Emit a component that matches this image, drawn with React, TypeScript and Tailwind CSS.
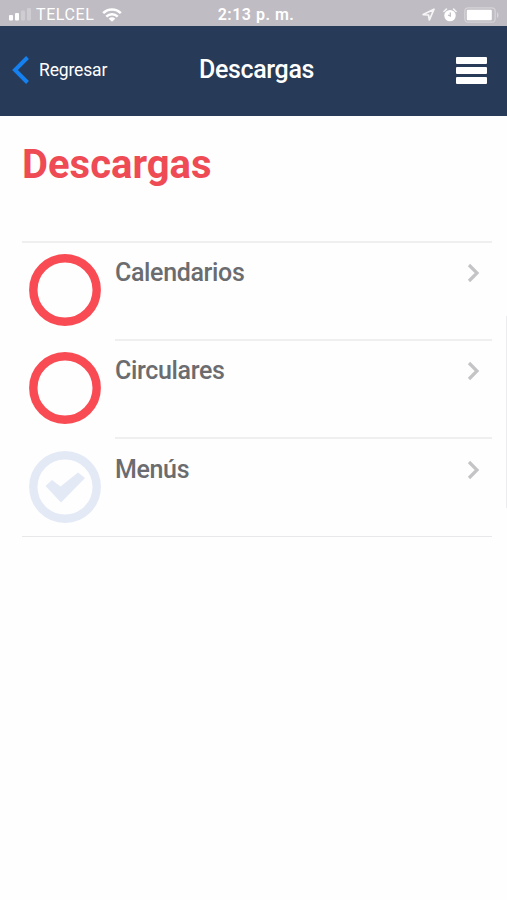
import { clsx } from 'clsx';

type Download = {
  id: string;
  title: string;
  read: boolean;
};

const downloads: Download[] = [
  { id: 'calendarios', title: 'Calendarios', read: false },
  { id: 'circulares', title: 'Circulares', read: false },
  { id: 'menus', title: 'Menús', read: true },
];

function SignalBars() {
  return (
    <svg width="24" height="13" viewBox="0 0 24 13" fill="white">
      <rect x="0" y="7" width="4" height="5.5" rx="1" />
      <rect x="6" y="5" width="4" height="7.5" rx="1" />
      <rect x="12" y="2.5" width="4" height="10" rx="1" opacity="0.25" />
      <rect x="18" y="0" width="4" height="12.5" rx="1" opacity="0.25" />
    </svg>
  );
}

function WifiIcon() {
  return (
    <svg width="20" height="14" viewBox="0 0 20 14" fill="none" stroke="white" strokeWidth="2.5">
      <path d="M1.2 5.2C6 0.2 14 0.2 18.8 5.2" />
      <path d="M4.3 8.6C7.5 5.3 12.5 5.3 15.7 8.6" />
      <path d="M10 13.8L6.7 10.7C8.6 8.9 11.4 8.9 13.3 10.7Z" fill="white" stroke="none" />
    </svg>
  );
}

function LocationIcon() {
  return (
    <svg width="13" height="13" viewBox="0 0 13 13" fill="none" stroke="white" strokeOpacity="0.85" strokeWidth="1.7" strokeLinejoin="round">
      <path d="M12 1.2L1.2 6.6L6.5 7L7.4 12Z" />
    </svg>
  );
}

function AlarmIcon() {
  return (
    <svg width="14" height="14" viewBox="0 0 14 14" fill="none">
      <circle cx="7" cy="7.6" r="5.7" fill="white" />
      <path d="M0.9 3.5L3.4 1.1M13.1 3.5L10.6 1.1" stroke="white" strokeOpacity="0.8" strokeWidth="1.6" strokeLinecap="round" />
      <path d="M7.3 4.6V8L5 7" stroke="#bfbcc3" strokeWidth="1.3" />
    </svg>
  );
}

function BatteryIcon() {
  return (
    <svg width="36" height="16" viewBox="0 0 36 16" fill="none">
      <rect x="0.8" y="0.8" width="30.4" height="14.4" rx="3.5" stroke="white" strokeOpacity="0.35" strokeWidth="1.3" />
      <rect x="2.8" y="2.8" width="25" height="10.4" rx="1" fill="white" />
      <path d="M33 5.2C35 6 35 10 33 10.8Z" fill="white" fillOpacity="0.4" />
    </svg>
  );
}

function StatusBar() {
  return (
    <div className="grid h-[26px] grid-cols-[1fr_auto_1fr] items-center bg-[#bfbcc3] pt-[3px] pr-[7px] pl-[9px] text-white">
      <div className="flex items-center">
        <SignalBars />
        <span className="ml-[3px] text-[16px] leading-5 tracking-[0.6px]">TELCEL</span>
        <span className="ml-[8px]">
          <WifiIcon />
        </span>
      </div>
      <span className="ml-[3px] text-[16px] leading-5 font-semibold tracking-[0.5px]">2:13 p. m.</span>
      <div className="flex items-center justify-end">
        <LocationIcon />
        <span className="mr-[7px] ml-[8px]">
          <AlarmIcon />
        </span>
        <BatteryIcon />
      </div>
    </div>
  );
}

function NavBar() {
  return (
    <header className="grid h-[90px] grid-cols-[1fr_auto_1fr] items-center bg-[#273a58] pr-5 pb-[2px] pl-3 text-white">
      <button className="flex items-center">
        <svg width="18" height="28" viewBox="0 0 18 28" fill="none" stroke="#1580ef" strokeWidth="4">
          <path d="M15.5 1.5L3 14L15.5 26.5" />
        </svg>
        <span className="ml-[9px] text-[17.5px] leading-6 tracking-[-0.15px]">Regresar</span>
      </button>
      <h2 className="ml-[14px] text-[25px] leading-8 font-medium tracking-[-0.35px]">Descargas</h2>
      <button className="flex flex-col gap-[3px] justify-self-end" aria-label="Menú">
        <span className="h-[7px] w-[31px] rounded-[1px] bg-white" />
        <span className="h-[7px] w-[31px] rounded-[1px] bg-white" />
        <span className="h-[7px] w-[31px] rounded-[1px] bg-white" />
      </button>
    </header>
  );
}

function StatusCircle({ read }: { read: boolean }) {
  return (
    <svg width="72" height="72" viewBox="0 0 72 72" fill="none">
      <circle cx="36" cy="36" r="31.7" stroke={read ? '#e3eaf6' : '#f94b53'} strokeWidth="8.4" />
      {read && <path d="M16.5 35L23 29L31.5 35.5L49 21.5L56 27L32 51.5Z" fill="#e3eaf6" />}
    </svg>
  );
}

function DownloadRow({ item, last }: { item: Download; last: boolean }) {
  return (
    <li className={clsx('flex pl-[7px]', last ? 'h-[97px] pt-px' : 'h-[98px]')}>
      <div className="w-[86px] shrink-0 pt-[11px]">
        <StatusCircle read={item.read} />
      </div>
      <div className={clsx('flex flex-1 items-start justify-between pr-3', !last && 'border-b-2 border-[#efeff0]')}>
        <span className="pt-[14px] text-[25px] leading-8 font-medium tracking-[-0.35px] text-[#6b6c6f]">{item.title}</span>
        <svg className="mt-[20px]" width="13" height="20" viewBox="0 0 13 20" fill="none" stroke="#c4c4c6" strokeWidth="3.2">
          <path d="M2 2L10 10L2 18" />
        </svg>
      </div>
    </li>
  );
}

export default function App() {
  return (
    <div className="relative h-[900px] w-[507px] overflow-hidden bg-[#fefefe] font-[Roboto,sans-serif]">
      <StatusBar />
      <NavBar />
      <main className="pt-[25px] pr-[15px] pl-[22px]">
        <h1 className="text-[40px] leading-[48px] font-bold text-[#ee4b54]">Descargas</h1>
        <ul className="mt-[52px] border-t-2 border-b border-t-[#efeff0] border-b-[#e8e8ea]">
          {downloads.map((item, i) => (
            <DownloadRow key={item.id} item={item} last={i === downloads.length - 1} />
          ))}
        </ul>
      </main>
      {/* Scroll indicator */}
      <div className="absolute top-[316px] right-0 h-[192px] w-px bg-[#ececee]" />
    </div>
  );
}
